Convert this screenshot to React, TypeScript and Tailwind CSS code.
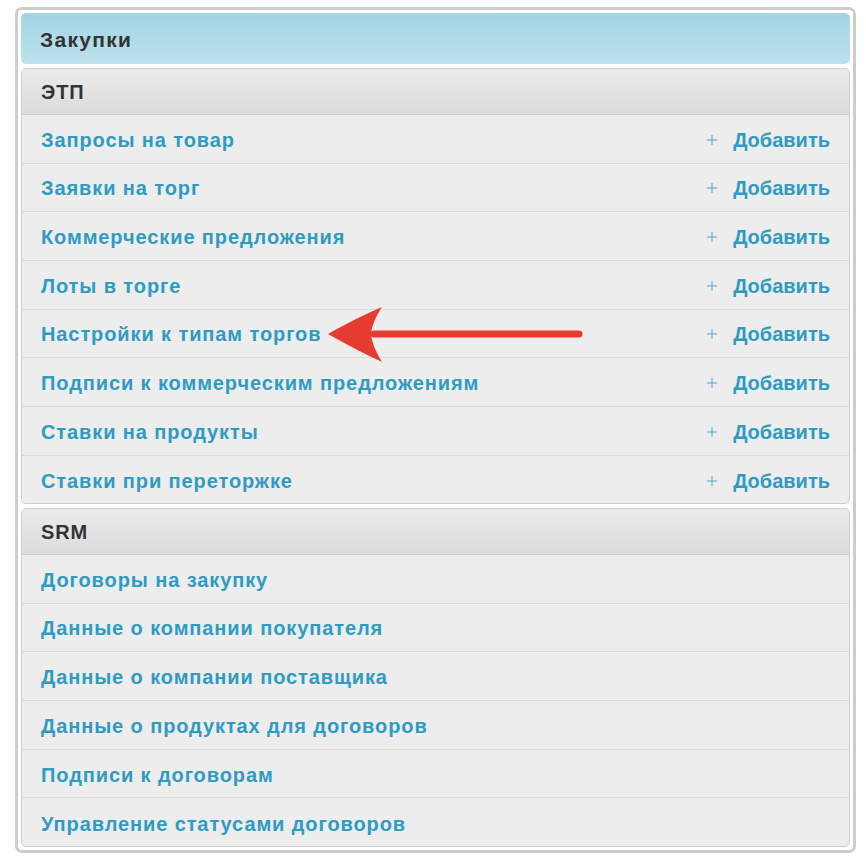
import { Plus } from "lucide-react";

const etp = [
  "Запросы на товар",
  "Заявки на торг",
  "Коммерческие предложения",
  "Лоты в торге",
  "Настройки к типам торгов",
  "Подписи к коммерческим предложениям",
  "Ставки на продукты",
  "Ставки при переторжке",
];

const srm = [
  "Договоры на закупку",
  "Данные о компании покупателя",
  "Данные о компании поставщика",
  "Данные о продуктах для договоров",
  "Подписи к договорам",
  "Управление статусами договоров",
];

const Row = ({ label, add, last }: { label: string; add: boolean; last: boolean }) => (
  <div
    className={`flex items-center justify-between h-[48.7px] pl-[19px] pr-[19px] pt-[2px] ${
      last ? "" : "border-b border-[#dadada]"
    }`}
  >
    <span className="text-[20px] font-bold tracking-[0.9px] text-[#309bc2]">{label}</span>
    {add && (
      <span className="flex items-center gap-[13px] text-[20px] font-bold text-[#309bc2]">
        <Plus size={16} strokeWidth={1.5} className="text-[#4fa8c8]" />
        Добавить
      </span>
    )}
  </div>
);

const Group = ({ title, items, add }: { title: string; items: string[]; add: boolean }) => (
  <div className="rounded-[5px] border border-[#cfcfcf] bg-[#ededed] overflow-hidden">
    <div className="h-[46px] flex items-center pl-[19px] pt-[2px] bg-gradient-to-b from-[#ebebeb] to-[#dcdcdc] border-b border-[#cfcfcf]">
      <span className="text-[20px] font-bold tracking-[0.9px] text-[#333]">{title}</span>
    </div>
    {items.map((it, i) => (
      <Row key={it} label={it} add={add} last={i === items.length - 1} />
    ))}
  </div>
);

export default function App() {
  return (
    <div
      className="w-[866px] h-[864px] bg-white pt-[7px] pl-[15px]"
      style={{ fontFamily: '"Liberation Sans", Arial, sans-serif' }}
    >
      <div className="relative w-[841px] h-[846px] border-[3px] border-[#cdcdcd] rounded-[7px] p-[3px] flex flex-col gap-[4px]">
        <div className="h-[51px] rounded-[5px] flex items-center pl-[19px] pt-[3px] bg-gradient-to-b from-[#a3d4e5] to-[#bde2ed]">
          <span className="text-[21px] font-bold tracking-[1.3px] text-[#333]">Закупки</span>
        </div>
        <Group title="ЭТП" items={etp} add />
        <Group title="SRM" items={srm} add={false} />
        <svg
          className="absolute left-[300px] top-[280px]"
          width="280"
          height="80"
          viewBox="0 0 280 80"
        >
          <line x1="56" y1="44" x2="261" y2="44" stroke="#e43c30" strokeWidth="7" strokeLinecap="round" />
          <path d="M 10 44 Q 40 27 64 17 Q 54 32 53 44 Q 54 56 64 72 Q 40 61 10 44 Z" fill="#e43c30" />
        </svg>
      </div>
    </div>
  );
}
